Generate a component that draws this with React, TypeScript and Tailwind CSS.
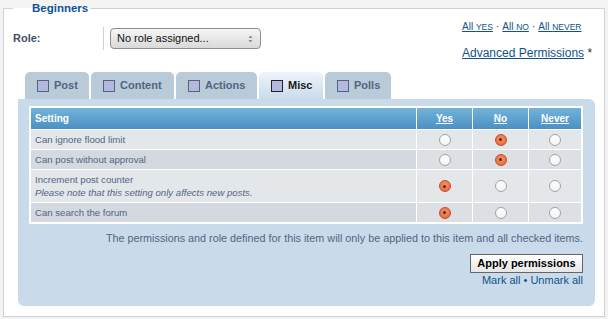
import React from "react";

const rows = [
  { label: "Can ignore flood limit", val: "no", h: "h-[19px]", dark: false },
  { label: "Can post without approval", val: "no", h: "h-[19px]", dark: true },
  {
    label: "Increment post counter",
    note: "Please note that this setting only affects new posts.",
    val: "yes",
    h: "h-[32px]",
    dark: false,
  },
  { label: "Can search the forum", val: "yes", h: "h-[19px]", dark: true },
];

function Radio({ on }: { on: boolean }) {
  if (on) {
    return (
      <span className="flex h-[12px] w-[12px] items-center justify-center rounded-full border border-[#c24e26] bg-[radial-gradient(circle_at_50%_40%,#f8946a,#e2622f)]">
        <span className="h-[3px] w-[3px] rounded-full bg-[#5a2414]" />
      </span>
    );
  }
  return (
    <span className="h-[12px] w-[12px] rounded-full border border-[#a3a3a3] bg-[linear-gradient(#ffffff,#f3f3f3)]" />
  );
}

function Tab({ label, w, active }: { label: string; w: string; active?: boolean }) {
  return (
    <div
      className={`${w} flex h-[27px] items-center gap-[5px] rounded-t-[5px] pl-[12px] text-[11px] font-bold ${
        active
          ? "bg-[linear-gradient(#eef4fa,#c9dbea)] text-[#1a1a1a]"
          : "bg-[#b9cad9] text-[#536482]"
      }`}
    >
      <span
        className={`h-[12px] w-[12px] border bg-[#b5b8de] ${
          active ? "border-[#222]" : "border-[#56627a]"
        }`}
      />
      <span>{label}</span>
    </div>
  );
}

function AllLink({ word }: { word: string }) {
  return (
    <a className="text-[#105289] underline">
      All <span className="text-[8.5px]">{word}</span>
    </a>
  );
}

export default function App() {
  return (
    <div className="h-[319px] w-[608px] bg-[#f3f3f3] pt-[1px] font-['Liberation_Sans',Arial,sans-serif]">
      <fieldset className="mx-[3px] border border-[#d2d2d2] bg-white pb-[10px]">
        <legend className="ml-[9px] pl-[19px] pr-[2px] text-[11.5px] font-bold leading-[14px] text-[#115098]">
          Beginners
        </legend>
        <div className="flex h-[57px] justify-between">
          <div className="mt-[12px] flex h-[23px] items-center pl-[9px]">
            <div className="w-[90px] text-[11px] font-bold text-[#425067]">Role:</div>
            <div className="flex h-[23px] items-center border-l border-[#d0d0d0] pl-[6px]">
              <div className="flex h-[21px] w-[151px] items-center justify-between rounded-[4px] border border-[#8e8e8e] bg-[linear-gradient(#f6f6f6,#d9d9d9)] pl-[6px] pr-[6px] text-[11px] text-[#111]">
                <span>No role assigned...</span>
                <svg width="7" height="10" viewBox="0 0 7 10">
                  <path d="M3.5 1.5 L5.5 4 L1.5 4 Z" fill="#888" />
                  <path d="M3.5 8.5 L5.5 6 L1.5 6 Z" fill="#888" />
                </svg>
              </div>
            </div>
          </div>
          <div className="mr-[9px] mt-[5px] flex w-[133px] flex-col items-start">
            <div className="flex items-baseline gap-[3px] text-[10px] leading-[14px] text-[#444]">
              <AllLink word="YES" />
              <span>·</span>
              <AllLink word="NO" />
              <span>·</span>
              <AllLink word="NEVER" />
            </div>
            <div className="mt-[12px] text-[12px] leading-[14px] text-[#333]">
              <a className="text-[#105289] underline">Advanced Permissions</a> *
            </div>
          </div>
        </div>
        <div className="ml-[14px] mr-[9px]">
          <div className="flex gap-[2px] pl-[7px]">
            <Tab label="Post" w="w-[64px]" />
            <Tab label="Content" w="w-[83px]" />
            <Tab label="Actions" w="w-[81px]" />
            <Tab label="Misc" w="w-[64px]" active />
            <Tab label="Polls" w="w-[66px]" />
          </div>
          <div className="rounded-[6px] rounded-tl-none bg-[#c9dbea] pb-[19px] pl-[11px] pr-[12px] pt-[7px]">
            <div className="grid grid-cols-[385px_55px_55px_52px] gap-px bg-white p-[2px]">
              <div className="flex h-[21px] items-center bg-[linear-gradient(#72b3da,#4c90c2)] pl-[4px] text-[10px] font-bold text-white">
                Setting
              </div>
              {["Yes", "No", "Never"].map((t) => (
                <div
                  key={t}
                  className="flex h-[21px] items-center justify-center bg-[linear-gradient(#72b3da,#4c90c2)] text-[10px] font-bold text-white underline"
                >
                  {t}
                </div>
              ))}
              {rows.map((r) => (
                <React.Fragment key={r.label}>
                  <div
                    className={`${r.h} flex flex-col justify-center pl-[4px] text-[9.6px] leading-[13px] text-[#536482] ${
                      r.dark ? "bg-[#d3d9df]" : "bg-[#e3e7ea]"
                    }`}
                  >
                    <span>{r.label}</span>
                    {r.note && <span className="italic">{r.note}</span>}
                  </div>
                  {["yes", "no", "never"].map((v) => (
                    <div
                      key={v}
                      className={`${r.h} flex items-center justify-center ${
                        r.dark ? "bg-[#dcdfe3]" : "bg-[#e4e7ea]"
                      }`}
                    >
                      <Radio on={r.val === v} />
                    </div>
                  ))}
                </React.Fragment>
              ))}
            </div>
            <p className="mt-[7px] text-right text-[10.8px] leading-[14px] text-[#536482]">
              The permissions and role defined for this item will only be applied to this item and all checked items.
            </p>
            <div className="mt-[9px] flex flex-col items-end">
              <button className="h-[19px] w-[113px] border border-[#666] bg-[linear-gradient(#ffffff,#e6e6e6)] text-[11px] font-bold text-black">
                Apply permissions
              </button>
              <div className="text-[11px] leading-[14px] text-[#105289]">
                Mark all • Unmark all
              </div>
            </div>
          </div>
        </div>
      </fieldset>
    </div>
  );
}
